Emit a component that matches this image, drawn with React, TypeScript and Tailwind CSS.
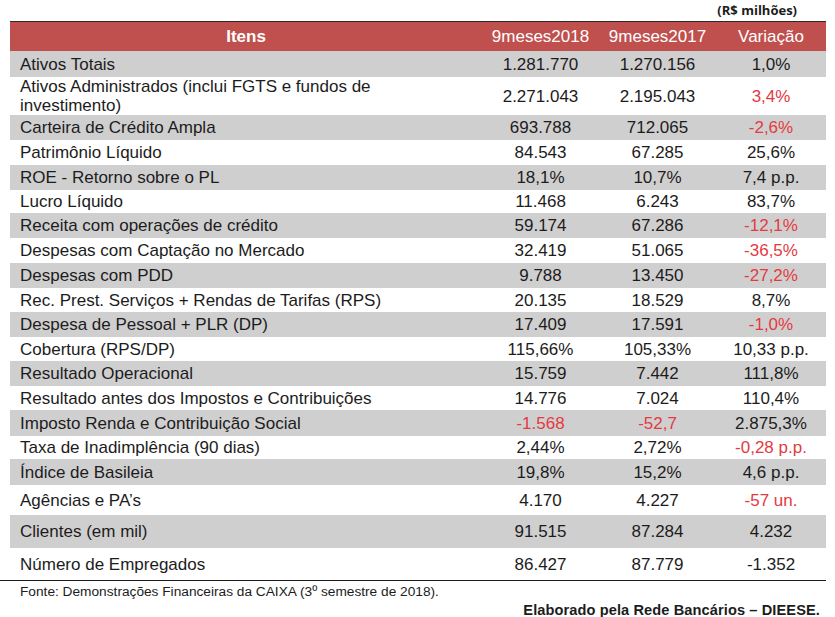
const RED = "text-[#e23b3f]";

type Row = {
  label: React.ReactNode;
  a: string;
  b: string;
  v: string;
  h: string;
  redA?: boolean;
  redB?: boolean;
  redV?: boolean;
};

const rows: Row[] = [
  { label: "Ativos Totais", a: "1.281.770", b: "1.270.156", v: "1,0%", h: "h-[26px]" },
  {
    label: (
      <>
        Ativos Administrados (inclui FGTS e fundos de
        <br />
        investimento)
      </>
    ),
    a: "2.271.043",
    b: "2.195.043",
    v: "3,4%",
    h: "h-[38px]",
    redV: true,
  },
  { label: "Carteira de Crédito Ampla", a: "693.788", b: "712.065", v: "-2,6%", h: "h-[25px]", redV: true },
  { label: "Patrimônio Líquido", a: "84.543", b: "67.285", v: "25,6%", h: "h-[25px]" },
  { label: "ROE - Retorno sobre o PL", a: "18,1%", b: "10,7%", v: "7,4 p.p.", h: "h-[25px]" },
  { label: "Lucro Líquido", a: "11.468", b: "6.243", v: "83,7%", h: "h-[23px]" },
  { label: "Receita com operações de crédito", a: "59.174", b: "67.286", v: "-12,1%", h: "h-[25px]", redV: true },
  { label: "Despesas com Captação no Mercado", a: "32.419", b: "51.065", v: "-36,5%", h: "h-[25px]", redV: true },
  { label: "Despesas com PDD", a: "9.788", b: "13.450", v: "-27,2%", h: "h-[25px]", redV: true },
  { label: "Rec. Prest. Serviços + Rendas de Tarifas (RPS)", a: "20.135", b: "18.529", v: "8,7%", h: "h-[24px]" },
  { label: "Despesa de Pessoal + PLR (DP)", a: "17.409", b: "17.591", v: "-1,0%", h: "h-[25px]", redV: true },
  { label: "Cobertura (RPS/DP)", a: "115,66%", b: "105,33%", v: "10,33 p.p.", h: "h-[24px]" },
  { label: "Resultado Operacional", a: "15.759", b: "7.442", v: "111,8%", h: "h-[25px]" },
  { label: "Resultado antes dos Impostos e Contribuições", a: "14.776", b: "7.024", v: "110,4%", h: "h-[24px]" },
  { label: "Imposto Renda e Contribuição Social", a: "-1.568", b: "-52,7", v: "2.875,3%", h: "h-[26px]", redA: true, redB: true },
  { label: "Taxa de Inadimplência (90 dias)", a: "2,44%", b: "2,72%", v: "-0,28 p.p.", h: "h-[23px]", redV: true },
  { label: "Índice de Basileia", a: "19,8%", b: "15,2%", v: "4,6 p.p.", h: "h-[26px]" },
  { label: "Agências e PA’s", a: "4.170", b: "4.227", v: "-57 un.", h: "h-[30px]", redV: true },
  { label: "Clientes (em mil)", a: "91.515", b: "87.284", v: "4.232", h: "h-[33px]" },
  { label: "Número de Empregados", a: "86.427", b: "87.779", v: "-1.352", h: "h-[32px]" },
];

export default function App() {
  return (
    <div className="h-[617px] w-[835px] overflow-hidden bg-white font-['Liberation_Sans',Arial,sans-serif] text-[#1c1c1c]">
      {/* unit note */}
      <div className="flex h-[21px] items-center justify-end pr-[38px] font-['Open_Sans',sans-serif] text-[13px] font-bold leading-none">
        (R$ milhões)
      </div>

      {/* TABLE */}
      <div className="ml-[10px] w-[816px] border-t border-[#2a2a2a]">
        <div className="grid h-[29px] grid-cols-[472px_117px_117px_110px] items-center bg-[#c0504d] text-[17px] leading-none text-white">
          <div className="text-center font-bold">Itens</div>
          <div className="text-center">9meses2018</div>
          <div className="text-center">9meses2017</div>
          <div className="text-center">Variação</div>
        </div>

        {rows.map((r, i) => (
          <div
            key={i}
            className={`grid grid-cols-[472px_117px_117px_110px] items-center text-[17px] leading-[19px] ${r.h} ${
              i % 2 === 0 ? "bg-[#d0cfd0]" : "bg-white"
            }`}
          >
            <div className="pl-[10px]">{r.label}</div>
            <div className={`text-center ${r.redA ? RED : ""}`}>{r.a}</div>
            <div className={`text-center ${r.redB ? RED : ""}`}>{r.b}</div>
            <div className={`text-center ${r.redV ? RED : ""}`}>{r.v}</div>
          </div>
        ))}
      </div>

      {/* FOOTER */}
      <div className="w-[826px] border-t border-[#1c1c1c] pl-[20px] pt-[2px] text-[13.7px] leading-[17px]">
        Fonte: Demonstrações Financeiras da CAIXA (3º semestre de 2018).
      </div>
      <div className="flex justify-end pr-[15px] pt-[1px] text-[14.6px] font-bold leading-[18px] tracking-[0.1px]">
        Elaborado pela Rede Bancários – DIEESE.
      </div>
    </div>
  );
}
